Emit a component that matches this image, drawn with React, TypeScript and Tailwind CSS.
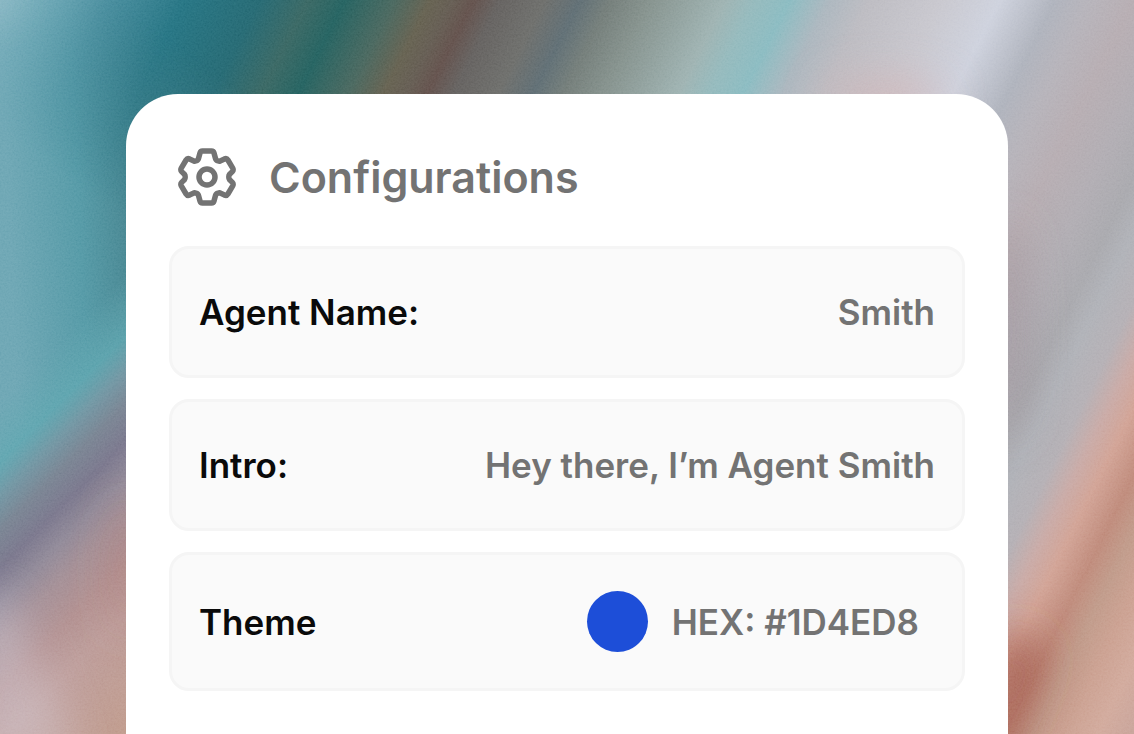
import { ReactNode } from "react";

const diagonalStops = [
  [0, "#86b6c4"],
  [50, "#6aa5b4"],
  [110, "#43899a"],
  [185, "#22707f"],
  [260, "#22656f"],
  [308, "#35635f"],
  [345, "#215e5c"],
  [395, "#45635a"],
  [430, "#615d4c"],
  [452, "#60584e"],
  [474, "#5f4d48"],
  [500, "#605d5b"],
  [545, "#696a67"],
  [580, "#5b6a70"],
  [610, "#6f7975"],
  [650, "#818e89"],
  [725, "#9bb0af"],
  [755, "#91b7ba"],
  [790, "#87b9bf"],
  [830, "#a9b4bc"],
  [870, "#bab9bf"],
  [940, "#c6c5cc"],
  [1000, "#ccd0dc"],
  [1055, "#acb0ba"],
  [1090, "#b3b0b7"],
  [1134, "#b4aaaf"],
  [1183, "#aeaab0"],
  [1223, "#a6a6ab"],
  [1250, "#adafb5"],
  [1285, "#b2adb2"],
  [1312, "#c7a7a3"],
  [1338, "#d0a092"],
  [1372, "#bd8777"],
  [1400, "#be9786"],
  [1430, "#c99d8d"],
  [1465, "#d0a799"],
  [1500, "#c7a197"],
] as const;

const lowerLeftStops = [
  [400, "#5da3ad", 0],
  [462, "#5aa3ad", 0.8],
  [495, "#6d93a0", 1],
  [530, "#75808f", 1],
  [568, "#767389", 1],
  [605, "#8e8695", 1],
  [640, "#a18c93", 1],
  [690, "#b08e8e", 1],
  [740, "#bb9a97", 1],
  [860, "#be9889", 1],
] as const;

const Backdrop = () => (
  <svg
    className="absolute inset-0 h-full w-full"
    viewBox="0 0 1134 734"
    preserveAspectRatio="xMidYMid slice"
    aria-hidden="true"
  >
    <defs>
      <linearGradient
        id="diagonal"
        gradientUnits="userSpaceOnUse"
        x1="0"
        y1="0"
        x2="1500"
        y2="0"
      >
        {diagonalStops.map(([at, color]) => (
          <stop key={at} offset={at / 1500} stopColor={color} />
        ))}
      </linearGradient>

      <linearGradient
        id="teal"
        gradientUnits="userSpaceOnUse"
        x1="0"
        y1="0"
        x2="140"
        y2="-6"
      >
        <stop offset="0" stopColor="#69a3b1" />
        <stop offset="0.5" stopColor="#5096a3" />
        <stop offset="1" stopColor="#3d7a85" />
      </linearGradient>

      <linearGradient
        id="lowerLeft"
        gradientUnits="userSpaceOnUse"
        x1="0"
        y1="0"
        x2="430"
        y2="430"
      >
        {lowerLeftStops.map(([at, color, opacity]) => (
          <stop
            key={at}
            offset={at / 860}
            stopColor={color}
            stopOpacity={opacity}
          />
        ))}
      </linearGradient>

      <linearGradient
        id="fade"
        gradientUnits="userSpaceOnUse"
        x1="200"
        y1="60"
        x2="100"
        y2="200"
      >
        <stop offset="0" stopColor="#000" />
        <stop offset="1" stopColor="#fff" />
      </linearGradient>

      <mask
        id="leftMask"
        maskUnits="userSpaceOnUse"
        x="0"
        y="0"
        width="300"
        height="734"
      >
        <rect width="300" height="734" fill="url(#fade)" />
      </mask>

      <filter id="soft" x="-20%" y="-20%" width="140%" height="140%">
        <feGaussianBlur stdDeviation="22" />
      </filter>

      <filter id="grain" x="0" y="0" width="100%" height="100%">
        <feTurbulence
          type="fractalNoise"
          baseFrequency="0.55"
          numOctaves="2"
          seed="4"
        />
        <feColorMatrix type="saturate" values="0" />
        <feComponentTransfer>
          <feFuncA type="linear" slope="0" intercept="1" />
        </feComponentTransfer>
      </filter>
    </defs>

    <rect
      width="1520"
      height="734"
      fill="url(#diagonal)"
      transform="skewX(-26.6)"
    />

    <g mask="url(#leftMask)">
      <rect width="300" height="734" fill="url(#teal)" />
      <rect width="300" height="734" fill="url(#lowerLeft)" />
    </g>

    <g filter="url(#soft)">
      <ellipse cx="885" cy="100" rx="60" ry="20" fill="#d0a9a9" opacity="0.6" />
      <ellipse cx="1008" cy="330" rx="16" ry="110" fill="#8e7c86" opacity="0.5" />
      <path d="M1005 630l40 20-50 130h-20z" fill="#97483c" opacity="0.9" />
      <ellipse cx="126" cy="570" rx="16" ry="70" fill="#a0605e" opacity="0.3" />
      <path d="M-30 600h40l60 134v30h-100z" fill="#d3cdd8" opacity="0.45" />
      <ellipse cx="0" cy="0" rx="10" ry="10" fill="#fff" opacity="0.7" />
    </g>

    <rect
      className="mix-blend-soft-light"
      width="1134"
      height="734"
      filter="url(#grain)"
      opacity="0.3"
    />
  </svg>
);

const GearIcon = () => (
  <svg
    className="size-15 shrink-0"
    viewBox="0 0 60 60"
    fill="none"
    stroke="currentColor"
    strokeWidth="5.5"
    strokeLinecap="round"
    strokeLinejoin="round"
    aria-hidden="true"
  >
    <path d="M25.500 4h9Q36.500 4 37 6L38.500 11.500Q39 13.400 41 13.900L42.600 14.200L47.500 11.900Q49.700 11.100 50.900 13L55.700 21.200Q56.700 23 55.300 24.600L52.400 27.500Q51.800 28.200 51.800 30Q51.800 31.800 52.400 32.500L55.300 35.400Q56.700 37 55.700 38.800L50.900 47Q49.700 48.900 47.500 48.100L42.600 45.800L41 46.100Q39 46.600 38.500 48.500L37 54Q36.500 56 34.500 56H25.500Q23.500 56 23 54L21.500 48.500Q21 46.600 19 46.100L17.400 45.800L12.500 48.100Q10.300 48.900 9.100 47L4.300 38.800Q3.300 37 4.700 35.400L7.600 32.500Q8.200 31.800 8.200 30Q8.200 28.200 7.600 27.500L4.700 24.600Q3.300 23 4.300 21.200L9.100 13Q10.300 11.100 12.500 11.900L17.400 14.200L19 13.900Q21 13.400 21.500 11.500L23 6Q23.500 4 25.500 4Z" />
    <circle cx="30" cy="30" r="8" />
  </svg>
);

const Row = ({ label, children }: { label: string; children: ReactNode }) => (
  <div className="flex items-center justify-between rounded-[20px] border-3 border-neutral-100 bg-neutral-50 px-[27px] py-9">
    <dt className="text-neutral-950">{label}</dt>
    <dd className="flex items-center gap-6">{children}</dd>
  </div>
);

const App = () => {
  return (
    <div className="relative flex h-screen flex-col overflow-hidden font-['Inter',sans-serif]">
      <Backdrop />

      <main className="relative mx-auto mt-[94px] w-7/9 grow rounded-t-[52px] bg-white px-[43px] pt-[49px]">
        <h1 className="flex items-center gap-8 px-2 text-[43px] leading-[68px] font-semibold text-neutral-500">
          <GearIcon />
          Configurations
        </h1>

        <dl className="mt-[35px] flex flex-col gap-[21px] text-[35px] leading-[54px] font-semibold text-neutral-500">
          <Row label="Agent Name:">Smith</Row>
          <Row label="Intro:">Hey there, I’m Agent Smith</Row>
          <Row label="Theme">
            <span className="size-[61px] rounded-full bg-[#1d4ed8]" />
            <span className="pr-4">HEX: #1D4ED8</span>
          </Row>
        </dl>
      </main>
    </div>
  );
};

export default App;
